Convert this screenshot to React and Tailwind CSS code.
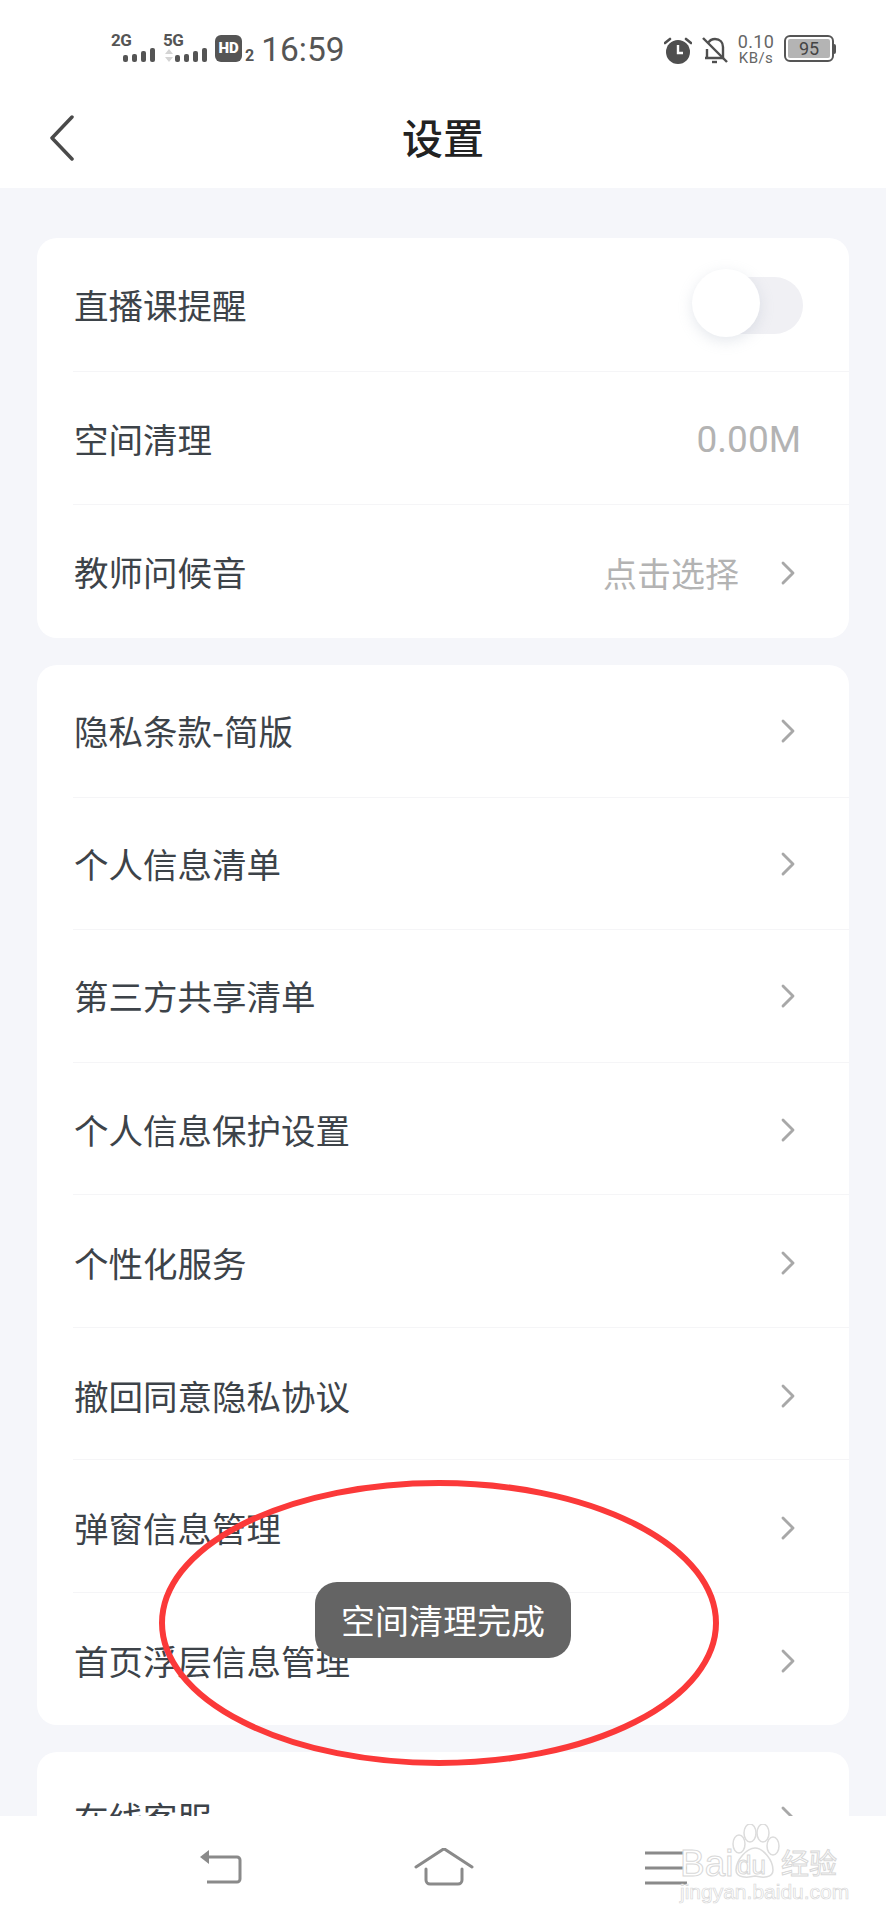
import { ChevronRight } from "lucide-react";

const FONT = "font-['Noto_Sans_CJK_SC','Noto_Sans',sans-serif]";

function SignalBars({ className = "" }) {
  return (
    <svg width="32" height="15" viewBox="0 0 32 15" className={className} fill="#555">
      <rect x="0" y="7" width="5" height="7" rx="2" />
      <rect x="9" y="6" width="5" height="8" rx="2" />
      <rect x="18" y="3" width="5" height="11" rx="2" />
      <rect x="27" y="0" width="5" height="14" rx="2" />
    </svg>
  );
}

function StatusBar() {
  return (
    <div className="flex h-[72px] items-start justify-between pl-[111px] pr-[50px] pt-[35px] font-['Roboto',sans-serif] text-[#555]">
      <div className="flex items-start">
        <div className="relative h-[28px] w-[44px]">
          <span className="absolute left-0 top-[-3px] text-[17px] font-bold leading-[17px] tracking-[-0.5px]">2G</span>
          <SignalBars className="absolute left-[12px] top-[13px]" />
        </div>
        <div className="relative ml-[8px] h-[28px] w-[44px]">
          <span className="absolute left-0 top-[-3px] text-[17px] font-bold leading-[17px] tracking-[-0.5px]">5G</span>
          <svg width="8" height="13" viewBox="0 0 8 13" className="absolute left-[2px] top-[14px]" fill="#d4d4d4">
            <path d="M4 0l4 5H0zM0 8h8l-4 5z" />
          </svg>
          <SignalBars className="absolute left-[12px] top-[13px]" />
        </div>
        <div className="ml-[8px] flex h-[27px] w-[27px] items-center justify-center rounded-[6px] bg-[#555] text-[15px] font-black leading-none text-white">
          HD
        </div>
        <span className="ml-[3px] mt-[14px] text-[16px] font-bold leading-[14px]">2</span>
        <span className="ml-[7px] mt-[-3px] text-[33.500px] leading-[35px]">16:59</span>
      </div>
      <div className="flex items-start">
        <svg width="28" height="27" viewBox="0 0 28 27" className="mt-[2px]">
          <circle cx="14" cy="15" r="12" fill="#4f4f4f" />
          <path d="M14 8v8h5" fill="none" stroke="#fff" strokeWidth="2.4" />
          <path d="M1 6l5-4M27 6l-5-4" stroke="#4f4f4f" strokeWidth="2.6" strokeLinecap="round" />
        </svg>
        <svg width="26" height="27" viewBox="0 0 26 27" className="ml-[10px] mt-[2px]" fill="none" stroke="#4f4f4f" strokeWidth="2.4">
          <path d="M3 21h19M5 21v-9M6.500 5.500C8 3 10 2 13 2c5 0 8 3.500 8 8v11" />
          <path d="M10 25h5" />
          <path d="M1 1l24 24" />
        </svg>
        <div className="ml-[9px] flex w-[38px] flex-col items-center text-[#666]">
          <span className="mt-[-2px] text-[18px] leading-[18px] tracking-[0.3px]">0.10</span>
          <span className="text-[15px] leading-[15px] tracking-[0.4px]">KB/s</span>
        </div>
        <div className="ml-[9px] flex items-center">
          <div className="flex h-[27px] w-[50px] items-center justify-center rounded-[6px] border-[2px] border-[#555] p-[2px]">
            <div className="flex h-full w-full items-center justify-center rounded-[2px] bg-[#b4b4b4] text-[18px] leading-none text-[#444]">
              95
            </div>
          </div>
          <div className="h-[10px] w-[2px] rounded-r-[2px] bg-[#555]" />
        </div>
      </div>
    </div>
  );
}

function Row({ label, value, latin = false, chevron = true, toggle = false, last = false, height = "h-[132.5px]", nudge = "" }) {
  return (
    <div className={`relative flex items-center pl-[37px] pr-[50px] ${height} ${nudge}`}>
      <span className="mt-[-2px] text-[34.500px] leading-none text-[#3d4349]">{label}</span>
      <div className="ml-auto flex items-center">
        {value && (
          <span className={`leading-none text-[#b3b3b3] ${latin ? "mr-[-2px] font-['Roboto',sans-serif] text-[37px]" : "text-[34px]"}`}>
            {value}
          </span>
        )}
        {chevron && (
          <ChevronRight
            className={`mr-[-9px] h-[40px] w-[40px] text-[#a8a8a8] ${value ? "ml-[29px]" : ""}`}
            strokeWidth={1.7}
          />
        )}
        {toggle && (
          <div className="relative mr-[-4px] h-[57px] w-[103px] rounded-full bg-[#f0f0f4]">
            <div className="absolute left-[-8px] top-[-8px] h-[68px] w-[68px] rounded-full bg-white shadow-[0_4px_14px_rgba(170,180,195,0.3)]" />
          </div>
        )}
      </div>
      {!last && <div className="absolute bottom-0 left-[36px] right-0 h-[1px] bg-[#f5f5f7]" />}
    </div>
  );
}

function Card({ children }) {
  return <div className="shrink-0 overflow-hidden rounded-[20px] bg-white">{children}</div>;
}

// lower rows sit a little under the row centre in the reference
const privacyRows = [
  { label: "隐私条款-简版", nudge: "" },
  { label: "个人信息清单", nudge: "" },
  { label: "第三方共享清单", nudge: "" },
  { label: "个人信息保护设置", nudge: "pt-[2px]" },
  { label: "个性化服务", nudge: "pt-[3px]" },
  { label: "撤回同意隐私协议", nudge: "pt-[4px]" },
  { label: "弹窗信息管理", nudge: "pt-[4px]" },
  { label: "首页浮层信息管理", nudge: "pt-[5px]" },
];

function Watermark() {
  return (
    <div className="pointer-events-none absolute left-[680px] top-[8px] h-[85px] w-[160px] font-['Liberation_Sans',sans-serif] text-white [-webkit-text-stroke:1px_#d8d8d8]">
      <span className="absolute left-0 top-[20px] text-[37px] leading-[40px]">Bai</span>
      <svg width="50" height="56" viewBox="0 0 50 56" className="absolute left-[50px] top-0" fill="#fff" stroke="#dcdcdc" strokeWidth="1.500">
        <ellipse cx="9" cy="20" rx="6" ry="9" />
        <ellipse cx="20" cy="9" rx="6" ry="9" />
        <ellipse cx="33" cy="9" rx="6" ry="9" />
        <ellipse cx="43" cy="22" rx="6" ry="9" />
        <path d="M25 24c8 0 18 12 18 22 0 8-10 8-18 6-8 2-19 2-19-6 0-10 11-22 19-22z" />
      </svg>
      <span className="absolute left-[57px] top-[27px] text-[26px] leading-[28px]">du</span>
      <span className={`absolute left-[101px] top-[22px] text-[28px] leading-[32px] ${FONT}`}>经验</span>
      <span className="absolute left-0 top-[56px] text-[21px] leading-[24px] [-webkit-text-stroke:0.7px_#d8d8d8]">jingyan.baidu.com</span>
    </div>
  );
}

function BottomNav() {
  return (
    <div className="relative flex h-[104px] shrink-0 items-start bg-white">
      <svg width="44" height="36" viewBox="0 0 44 36" className="absolute left-[199px] top-[32px]" fill="none" stroke="#8a8a8a" strokeWidth="3">
        <path d="M8 9h30a3 3 0 0 1 3 3v19a3 3 0 0 1-3 3H8" />
        <path d="M1 9l9-7v14z" fill="#8a8a8a" stroke="none" />
      </svg>
      <svg width="60" height="38" viewBox="0 0 60 38" className="absolute left-[414px] top-[32px]" fill="none" stroke="#8a8a8a" strokeWidth="3" strokeLinecap="round">
        <path d="M2 19L28 2a3 3 0 0 1 4 0l26 17" />
        <path d="M12 21v11a4 4 0 0 0 4 4h28a4 4 0 0 0 4-4V21" />
      </svg>
      <svg width="42" height="34" viewBox="0 0 42 34" className="absolute left-[645px] top-[35px]" stroke="#8a8a8a" strokeWidth="3">
        <path d="M0 2h42M0 17h42M0 32h42" />
      </svg>
      <Watermark />
    </div>
  );
}

export default function App() {
  return (
    <div className={`relative flex h-[1920px] w-[886px] flex-col overflow-hidden bg-[#f5f6fa] ${FONT}`}>
      <div className="shrink-0 bg-white">
        <StatusBar />
        <div className="relative flex h-[116px] items-center justify-center">
          <svg width="26" height="46" viewBox="0 0 26 46" className="absolute left-[49px] top-[43px]" fill="none" stroke="#4a4a4a" strokeWidth="3.500" strokeLinecap="round" strokeLinejoin="round">
            <path d="M23 2L3 23l20 21" />
          </svg>
          <span className="mt-[12px] text-[41px] font-medium leading-none text-[#222]">设置</span>
        </div>
      </div>

      <div className="flex min-h-0 flex-1 flex-col gap-[27px] overflow-hidden px-[37px] pt-[50px]">
        <Card>
          <Row label="直播课提醒" chevron={false} toggle height="h-[134px]" />
          <Row label="空间清理" value="0.00M" latin chevron={false} height="h-[133px]" nudge="pt-[2px]" />
          <Row label="教师问候音" value="点击选择" last height="h-[133px]" nudge="pt-[2px]" />
        </Card>
        <Card>
          {privacyRows.map((row, i) => (
            <Row key={row.label} label={row.label} nudge={row.nudge} last={i === privacyRows.length - 1} />
          ))}
        </Card>
        <Card>
          <Row label="在线客服" />
        </Card>
      </div>

      <BottomNav />

      {/* toast + red annotation sit over the list */}
      <div className="absolute left-[315px] top-[1582px] flex h-[76px] w-[256px] items-center justify-center rounded-[22px] bg-[#646464] text-[34px] leading-none text-white">
        空间清理完成
      </div>
      <svg width="570" height="296" viewBox="0 0 570 296" className="pointer-events-none absolute left-[154px] top-[1475px]" fill="none">
        <ellipse cx="285" cy="148" rx="277" ry="140" stroke="#fb3939" strokeWidth="6" />
      </svg>
    </div>
  );
}
